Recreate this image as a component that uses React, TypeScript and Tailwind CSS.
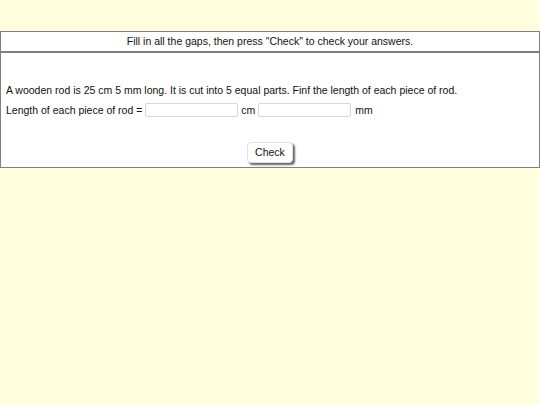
export default function App() {
  return (
    <div className="min-h-[405px] bg-[#ffffe0] pt-[31px] font-['Liberation_Sans',Arial,sans-serif] text-[10.5px] text-[#111]">
      <div className="border border-[#808080] bg-white h-[21px] flex items-center justify-center">
        Fill in all the gaps, then press "Check" to check your answers.
      </div>
      <div className="border border-[#808080] bg-white h-[116px] pt-[31px] px-[5px]">
        <div className="leading-[13px]">
          A wooden rod is 25 cm 5 mm long. It is cut into 5 equal parts. Finf the length of each piece of rod.
        </div>
        <div className="mt-[5px] flex items-center h-[16px] leading-[13px]">
          <span>Length of each piece of rod =</span>
          <input className="ml-[3px] w-[93px] h-[14px] border border-[#d8d8d8] rounded-[2px] bg-white outline-none" />
          <span className="ml-[3px]">cm</span>
          <input className="ml-[3px] w-[93px] h-[14px] border border-[#d8d8d8] rounded-[2px] bg-white outline-none" />
          <span className="ml-[4px]">mm</span>
        </div>
        <div className="flex justify-center mt-[24px]">
          <button className="w-[46px] h-[21px] rounded-[4px] bg-white border border-[#e0e0e0] shadow-[2px_2px_2px_#666] text-[10.5px] leading-[19px] text-[#111]">
            Check
          </button>
        </div>
      </div>
    </div>
  );
}
